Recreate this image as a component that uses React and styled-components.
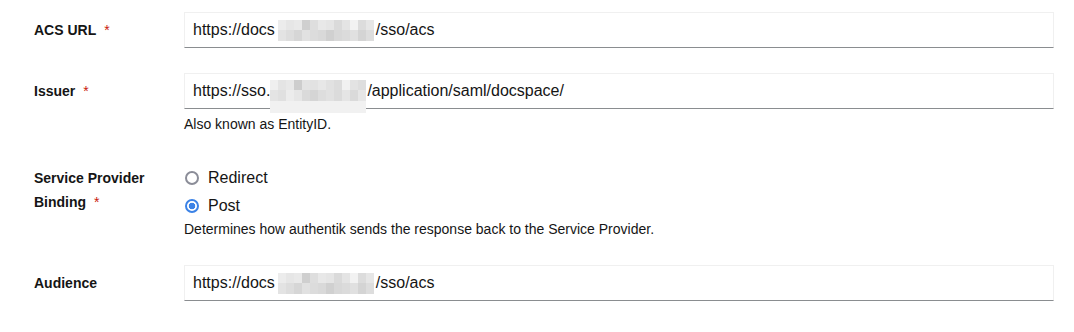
import React from "react";
import styled, { createGlobalStyle } from "styled-components";

const GlobalStyle = createGlobalStyle`
  html, body {
    margin: 0;
    padding: 0;
    background: #ffffff;
  }
  body {
    font-family: "Liberation Sans", Arial, sans-serif;
    color: #151515;
  }
`;

// pixelated redaction shades, row by row
const SHORT_MOSAIC = [
  ["#ececec", "#e6e6e6", "#e9e9e9", "#cfcfcf", "#dedede", "#e8e8e8", "#e5e5e5", "#dadada", "#e4e4e4", "#f2f2f2", "#dcdcdc", "#e6e6e6"],
  ["#e3e3e3", "#dddddd", "#d6d6d6", "#e1e1e1", "#dcdcdc", "#d9d9d9", "#d0d0d0", "#d8d8d8", "#dbdbdb", "#e0e0e0", "#d4d4d4", "#dddddd"],
];

const TALL_MOSAIC = [
  ["#efefef", "#e4e4e4", "#e8e8e8", "#cdcdcd", "#e3e3e3", "#e2e2e2", "#e7e7e7", "#e1e1e1", "#dcdcdc", "#f1f1f1", "#e3e3e3", "#dedede"],
  ["#e4e4e4", "#e0e0e0", "#ececec", "#e6e6e6", "#dadada", "#d5d5d5", "#dddddd", "#e1e1e1", "#dbdbdb", "#e5e5e5", "#dadada", "#e6e6e6"],
  ["#f1f1f1", "#f1f1f1", "#f1f1f1", "#f1f1f1", "#f1f1f1", "#f1f1f1", "#f1f1f1", "#f1f1f1", "#f1f1f1", "#f1f1f1", "#f1f1f1", "#f1f1f1"],
];

const Form = styled.form`
  display: grid;
  row-gap: 25px;
  padding: 12px 20px 20px 34px;
`;

const Group = styled.div`
  display: grid;
  grid-template-columns: 134px 1fr;
  column-gap: 16px;
`;

const Label = styled.div`
  font-size: 14px;
  font-weight: 700;
  line-height: 24px;
  padding-top: 6px;
  color: #151515;
`;

const Required = styled.span`
  color: #c9190b;
  margin-left: 8px;
  font-weight: 400;
`;

const Control = styled.div`
  display: flex;
  flex-direction: column;
  min-width: 0;
`;

const TextInput = styled.div`
  box-sizing: border-box;
  height: 36px;
  display: flex;
  align-items: center;
  padding: 0 8px;
  border: 1px solid #f0f0f0;
  border-bottom-color: #8a8d90;
  background: #ffffff;
  font-size: 16px;
  color: #151515;
  white-space: nowrap;
`;

const Mosaic = styled.span`
  display: grid;
  grid-template-columns: repeat(12, 8px);
  grid-auto-rows: ${(p) => (p.$tall ? "10px 11px 12px" : "10px 11px")};
  align-self: ${(p) => (p.$tall ? "flex-start" : "center")};
  margin: ${(p) => (p.$tall ? "6px 1px -12px 0" : "0 2px 0 3px")};
  height: ${(p) => (p.$tall ? "33px" : "21px")};
  position: relative;
  z-index: 1;
`;

const Cell = styled.span`
  background: ${(p) => p.$shade};
`;

const Helper = styled.div`
  font-size: 14px;
  line-height: 21px;
  margin-top: ${(p) => p.$top}px;
  color: #151515;
`;

const RadioList = styled.div`
  display: flex;
  flex-direction: column;
  gap: 4px;
  padding-top: 6px;
`;

const RadioRow = styled.label`
  display: flex;
  align-items: center;
  height: 24px;
  font-size: 16px;
  color: #151515;
  gap: 9px;
  padding-left: 1px;
`;

const RadioDot = styled.span`
  box-sizing: border-box;
  width: 14px;
  height: 14px;
  border-radius: 50%;
  border: 2px solid ${(p) => (p.$checked ? "#3b82e6" : "#8b8d98")};
  background: ${(p) => (p.$checked ? "radial-gradient(circle, #3b82e6 0 3px, #ffffff 3.6px)" : "#ffffff")};
  flex: none;
`;

function Redacted({ rows, tall }) {
  return (
    <Mosaic $tall={tall}>
      {rows.flatMap((row, r) => row.map((shade, c) => <Cell key={r + "-" + c} $shade={shade} />))}
    </Mosaic>
  );
}

function UrlField({ before, after, tall }) {
  return (
    <TextInput>
      <span>{before}</span>
      <Redacted rows={tall ? TALL_MOSAIC : SHORT_MOSAIC} tall={tall} />
      <span>{after}</span>
    </TextInput>
  );
}

export default function App() {
  return (
    <>
      <GlobalStyle />
      <Form>
        <Group>
          <Label>
            ACS URL<Required>*</Required>
          </Label>
          <Control>
            <UrlField before="https://docs" after="/sso/acs" />
          </Control>
        </Group>

        <Group>
          <Label>
            Issuer<Required>*</Required>
          </Label>
          <Control>
            <UrlField before="https://sso." after="/application/saml/docspace/" tall />
            <Helper $top={5}>Also known as EntityID.</Helper>
          </Control>
        </Group>

        <Group>
          <Label>
            Service Provider
            <br />
            Binding<Required>*</Required>
          </Label>
          <Control>
            <RadioList>
              <RadioRow>
                <RadioDot />
                Redirect
              </RadioRow>
              <RadioRow>
                <RadioDot $checked />
                Post
              </RadioRow>
            </RadioList>
            <Helper $top={1}>Determines how authentik sends the response back to the Service Provider.</Helper>
          </Control>
        </Group>

        <Group>
          <Label>Audience</Label>
          <Control>
            <UrlField before="https://docs" after="/sso/acs" />
          </Control>
        </Group>
      </Form>
    </>
  );
}
